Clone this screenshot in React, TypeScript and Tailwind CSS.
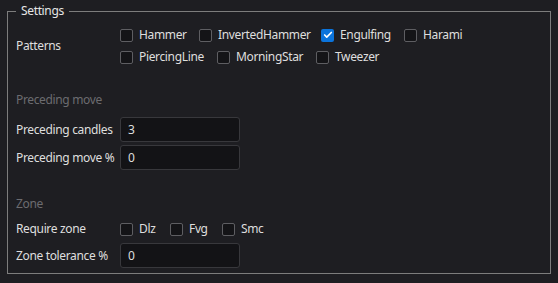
import { Check } from "lucide-react";

type Opt = { label: string; checked?: boolean; w?: string };

const row1: Opt[] = [
  { label: "Hammer", w: "w-[79px]" },
  { label: "InvertedHammer", w: "w-[122px]" },
  { label: "Engulfing", checked: true, w: "w-[83px]" },
  { label: "Harami" },
];
const row2: Opt[] = [
  { label: "PiercingLine", w: "w-[97px]" },
  { label: "MorningStar", w: "w-[99px]" },
  { label: "Tweezer" },
];
const zones: Opt[] = [
  { label: "Dlz", w: "w-[50px]" },
  { label: "Fvg", w: "w-[52px]" },
  { label: "Smc" },
];

const CheckItem = ({ label, checked, w }: Opt) => (
  <label className={`flex items-center gap-[6px] h-[22px] shrink-0 ${w ?? ""}`}>
    {checked ? (
      <span className="w-[13px] h-[13px] rounded-[2px] bg-[#0b74dc] flex items-center justify-center">
        <Check className="w-[10px] h-[10px] text-white" strokeWidth={4} />
      </span>
    ) : (
      <span className="w-[13px] h-[13px] rounded-[2px] border border-[#5e5e62] bg-[#141417]" />
    )}
    <span>{label}</span>
  </label>
);

const Field = ({ label, value }: { label: string; value: string }) => (
  <div className="flex items-center h-[25px]">
    <div className="w-[104px]">{label}</div>
    <div className="w-[120px] h-[25px] rounded-[3px] border border-[#38383c] bg-[#131316] flex items-center px-[7px]">
      {value}
    </div>
  </div>
);

const App = () => {
  return (
    <div
      className="w-[558px] h-[283px] bg-[#1e1e22] pt-[3px] px-[7px] text-[12px] leading-[16px] tracking-[-0.35px] text-[#dedede]"
      style={{ fontFamily: '"Noto Sans", "Open Sans", sans-serif' }}
    >
      <fieldset className="border border-[#7d7d7d] h-[271px] px-[8px]">
        <legend className="px-[5px] text-[#e6e6e6]">Settings</legend>

        <div className="flex items-center pt-[5px]">
          <div className="w-[104px]">Patterns</div>
          <div className="flex flex-col">
            <div className="flex">
              {row1.map((o) => (
                <CheckItem key={o.label} {...o} />
              ))}
            </div>
            <div className="flex">
              {row2.map((o) => (
                <CheckItem key={o.label} {...o} />
              ))}
            </div>
          </div>
        </div>

        <div className="mt-[22px] h-[20px] flex items-center text-[#6c6c70]">Preceding move</div>
        <div className="mt-[7px] flex flex-col gap-[3px]">
          <Field label="Preceding candles" value="3" />
          <Field label="Preceding move %" value="0" />
        </div>

        <div className="mt-[24px] h-[20px] flex items-center text-[#6c6c70]">Zone</div>
        <div className="mt-[4px] flex items-center">
          <div className="w-[104px]">Require zone</div>
          <div className="flex">
            {zones.map((o) => (
              <CheckItem key={o.label} {...o} />
            ))}
          </div>
        </div>
        <div className="mt-[3px]">
          <Field label="Zone tolerance %" value="0" />
        </div>
      </fieldset>
    </div>
  );
};

export default App;
